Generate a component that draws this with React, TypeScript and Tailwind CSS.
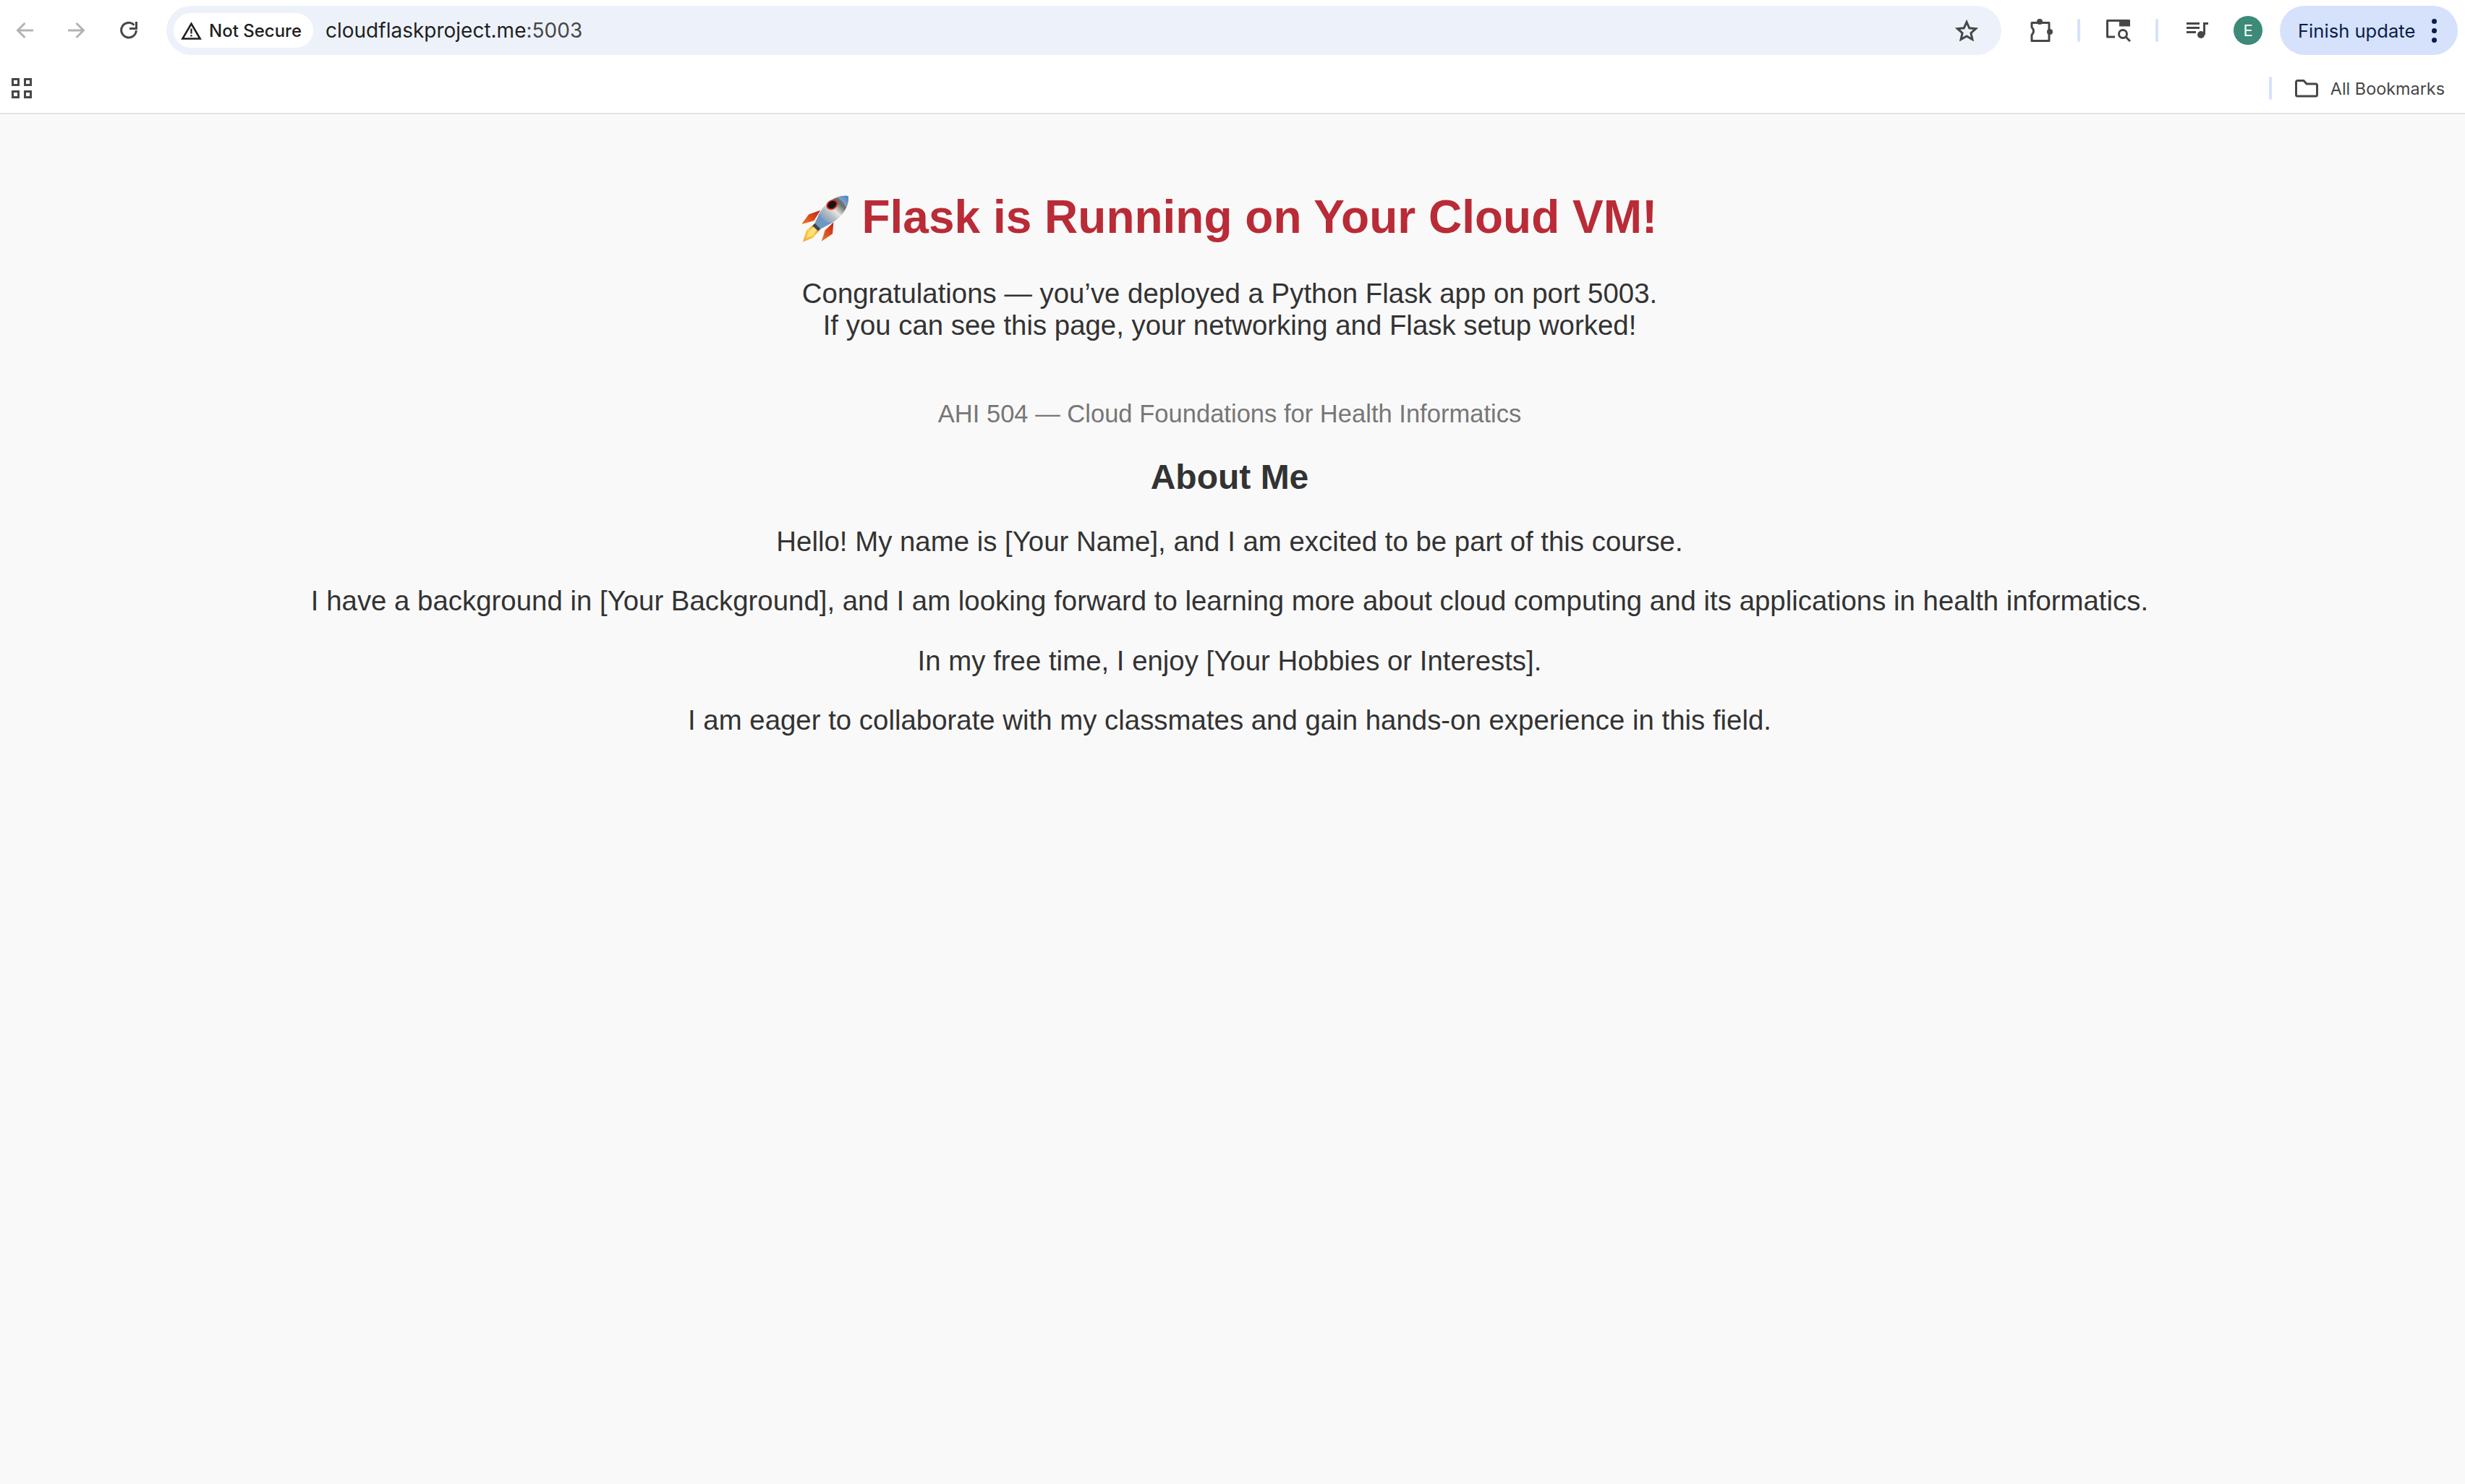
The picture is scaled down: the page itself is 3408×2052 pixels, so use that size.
function BackIcon() {
  return (
    <svg width="24" height="24" viewBox="0 0 24 24" fill="none" stroke="#b3b3b3" strokeWidth="3" className="shrink-0">
      <path d="M24 12H3M12.5 2 2.5 12l10 10" />
    </svg>
  )
}

function ForwardIcon() {
  return (
    <svg width="24" height="24" viewBox="0 0 24 24" fill="none" stroke="#b3b3b3" strokeWidth="3" className="shrink-0">
      <path d="M0 12h21M11.5 2l10 10-10 10" />
    </svg>
  )
}

function ReloadIcon() {
  return (
    <svg width="24" height="24" viewBox="0 0 24 24" fill="none" stroke="#474747" strokeWidth="3" className="shrink-0">
      <path d="M19.5 4.6A10.3 10.3 0 1 0 22.3 12" />
      <path d="M22.5 0v9.5H13" />
    </svg>
  )
}

function AppsIcon() {
  return (
    <svg width="28" height="28" viewBox="0 0 28 28" fill="none" stroke="#474747" strokeWidth="3" className="shrink-0">
      <rect x="1.5" y="1.5" width="8" height="8" />
      <rect x="18.5" y="1.5" width="8" height="8" />
      <rect x="1.5" y="18.5" width="8" height="8" />
      <rect x="18.5" y="18.5" width="8" height="8" />
    </svg>
  )
}

function WarningIcon() {
  return (
    <svg width="29" height="25" viewBox="0 0 29 25" fill="none" className="shrink-0">
      <path d="M14.5 2.8 2.4 23.5h24.2z" stroke="#1f1f1f" strokeWidth="2.6" />
      <path d="M14.5 9.5v7M14.5 18.2v2.4" stroke="#1f1f1f" strokeWidth="2.2" />
    </svg>
  )
}

function StarIcon() {
  return (
    <svg width="32" height="30" viewBox="0 0 32 30" fill="none" stroke="#474747" strokeWidth="3" strokeLinejoin="miter" className="shrink-0">
      <path d="M16 3.5l3.7 8.3 9 .9-6.8 6 2 8.8L16 22.9l-7.9 4.6 2-8.8-6.8-6 9-.9z" />
    </svg>
  )
}

function PuzzleIcon() {
  return (
    <svg width="32" height="32" viewBox="0 0 32 32" fill="none" className="shrink-0">
      <path d="M3 5.5h24v25H3v-8q5-5.5 0-11z" stroke="#474747" strokeWidth="3" strokeLinejoin="round" />
      <circle cx="14" cy="4" r="4" fill="#474747" />
      <circle cx="28" cy="18" r="4" fill="#474747" />
    </svg>
  )
}

function TabSearchIcon() {
  return (
    <svg width="36" height="32" viewBox="0 0 36 32" fill="none" className="shrink-0">
      <path d="M13 25H2.5V2.5H33" stroke="#474747" strokeWidth="3" strokeLinejoin="round" />
      <rect x="19" y="1.5" width="15" height="9" fill="#474747" />
      <circle cx="24" cy="21" r="5.5" stroke="#474747" strokeWidth="3" />
      <path d="M28 25l6 6" stroke="#474747" strokeWidth="3" />
    </svg>
  )
}

function MusicIcon() {
  return (
    <svg width="31" height="24" viewBox="0 0 31 24" fill="none" className="shrink-0">
      <path d="M1 2.5h18M1 8.5h18M1 14.500h13M25.500 18V2.500H31" stroke="#474747" strokeWidth="3" />
      <circle cx="21" cy="18" r="5" fill="#474747" />
    </svg>
  )
}

function FolderIcon() {
  return (
    <svg width="32" height="25" viewBox="0 0 32 25" fill="none" className="shrink-0">
      <path d="M1.500 3.500a2 2 0 0 1 2-2H12l4 4.500h12.500a2 2 0 0 1 2 2v13a2 2 0 0 1-2 2h-25a2 2 0 0 1-2-2z" stroke="#474747" strokeWidth="3" strokeLinejoin="round" />
    </svg>
  )
}

function RocketEmoji() {
  return (
    <svg width="65" height="67" viewBox="33 22 187 192" className="inline-block align-[-14px]">
      <defs>
        <linearGradient id="hull" x1="0.3" y1="0.95" x2="0.85" y2="0.35">
          <stop offset="0" stopColor="#5d8fc4" />
          <stop offset="0.45" stopColor="#b5bcc0" />
          <stop offset="0.7" stopColor="#e6e6e2" />
          <stop offset="1" stopColor="#6e7270" />
        </linearGradient>
        <linearGradient id="nose" x1="0" y1="1" x2="1" y2="0">
          <stop offset="0" stopColor="#b9bcbc" />
          <stop offset="1" stopColor="#3f83cf" />
        </linearGradient>
        <linearGradient id="fin" x1="1" y1="0" x2="0" y2="1">
          <stop offset="0" stopColor="#bf2116" />
          <stop offset="1" stopColor="#ef7a22" />
        </linearGradient>
        <linearGradient id="flame" x1="1" y1="0" x2="0" y2="1">
          <stop offset="0" stopColor="#e8641c" />
          <stop offset="0.5" stopColor="#fbd24a" />
          <stop offset="1" stopColor="#f3a23a" />
        </linearGradient>
      </defs>
      <path d="M106 84 60 100 30 140l50-14z" fill="url(#fin)" />
      <path d="M158 132l-4 46-44 30 14-44z" fill="url(#fin)" />
      <path d="M84 136 50 164l-14 46 40-16 30-34z" fill="url(#flame)" />
      <path d="M80 148 58 172l-8 22 24-10 18-22z" fill="#fde27a" />
      <path d="M216 28C178 20 128 48 104 92L84 136l22 22 46-24C190 112 222 70 216 28z" fill="url(#hull)" />
      <path d="M216 28c-14-3-30-1-44 5 14 6 28 22 34 38 10-14 13-29 10-43z" fill="url(#nose)" />
      <path d="M102 96c8 24 24 38 50 38l-46 24-22-22z" fill="#6f97bf" />
      <path d="M84 136l22 22-10 8-22-20z" fill="#3b4650" />
      <ellipse cx="152" cy="62" rx="24" ry="19" transform="rotate(-32 152 62)" fill="#d3261e" />
      <ellipse cx="152" cy="62" rx="18" ry="13.500" transform="rotate(-32 152 62)" fill="#141414" />
    </svg>
  )
}

export default function App() {
  return (
    <div className="min-h-[2052px] bg-[#f9f9f9] font-['Liberation_Sans',Arial,sans-serif] leading-[normal] text-[#333333]">
      <header className="bg-white border-b-2 border-[#e3e3e3] font-['Inter',sans-serif]">
        <div className="flex items-center h-[84px] pl-[22px] pr-[10px]">
          <BackIcon />
          <div className="ml-[48px]"><ForwardIcon /></div>
          <div className="ml-[48px]"><ReloadIcon /></div>
          <div className="ml-[40px] flex-1 flex items-center h-[68px] rounded-full bg-[#edf2fa] pl-[10px] pr-[32px]">
            <div className="flex items-center w-[193px] h-[48px] rounded-full bg-white pl-[10px]">
              <WarningIcon />
              <span className="ml-[10px] text-[24px] font-medium text-[#1f1f1f] whitespace-nowrap">Not Secure</span>
            </div>
            <span className="ml-[17px] text-[28px] text-[#1f1f1f]">
              cloudflaskproject.me<span className="text-[#474747]">:5003</span>
            </span>
            <div className="ml-auto"><StarIcon /></div>
          </div>
          <div className="ml-[39px]"><PuzzleIcon /></div>
          <div className="ml-[34px] w-[4px] h-[32px] rounded-full bg-[#d6e2fb]" />
          <div className="ml-[35px]"><TabSearchIcon /></div>
          <div className="ml-[33px] w-[4px] h-[32px] rounded-full bg-[#d6e2fb]" />
          <div className="ml-[38px]"><MusicIcon /></div>
          <div className="ml-[35px] flex items-center justify-center w-[40px] h-[40px] rounded-full bg-[#3d8a78] text-[22px] text-white">E</div>
          <div className="ml-[24px] flex items-center w-[246px] h-[68px] rounded-full bg-[#d6e2fb] pl-[25px]">
            <span className="text-[25.6px] text-[#0b1d4a] whitespace-nowrap">Finish update</span>
            <div className="ml-[23px] flex flex-col gap-[6px]">
              <span className="w-[7px] h-[7px] rounded-full bg-[#0b1d4a]" />
              <span className="w-[7px] h-[7px] rounded-full bg-[#0b1d4a]" />
              <span className="w-[7px] h-[7px] rounded-full bg-[#0b1d4a]" />
            </div>
          </div>
        </div>
        <div className="flex items-center h-[72px] pl-[16px] pr-[28px] pt-[4px]">
          <AppsIcon />
          <div className="ml-auto w-[4px] h-[32px] rounded-full bg-[#d6e2fb]" />
          <div className="ml-[32px]"><FolderIcon /></div>
          <span className="ml-[17px] text-[23.4px] text-[#474747] whitespace-nowrap">All Bookmarks</span>
        </div>
      </header>

      <main className="flex flex-col items-center pt-[105px] pr-[8px] text-center">
        <h1 className="text-[64px] font-bold text-[#b92b36]">
          <RocketEmoji /> Flask is Running on Your Cloud VM!
        </h1>
        <p className="mt-[47px] text-[38.4px]">
          Congratulations — you’ve deployed a Python Flask app on port 5003.
          <br />
          If you can see this page, your networking and Flask setup worked!
        </p>
        <p className="mt-[81px] text-[34.56px] text-[#777777]">AHI 504 — Cloud Foundations for Health Informatics</p>
        <h2 className="mt-[40px] text-[48px] font-bold text-[#333333]">About Me</h2>
        <p className="mt-[40px] text-[38.4px]">Hello! My name is [Your Name], and I am excited to be part of this course.</p>
        <p className="mt-[38.4px] text-[38.4px]">I have a background in [Your Background], and I am looking forward to learning more about cloud computing and its applications in health informatics.</p>
        <p className="mt-[38.4px] text-[38.4px]">In my free time, I enjoy [Your Hobbies or Interests].</p>
        <p className="mt-[38.4px] text-[38.4px]">I am eager to collaborate with my classmates and gain hands-on experience in this field.</p>
      </main>
    </div>
  )
}
